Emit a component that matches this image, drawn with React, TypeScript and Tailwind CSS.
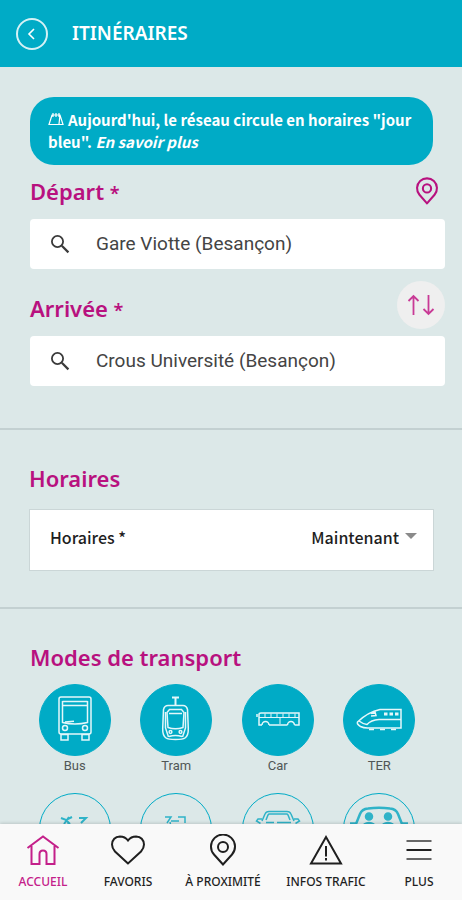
import { useState, type ReactNode } from 'react';
import clsx from 'clsx';

const Pin = ({ className }: { className?: string }) => (
  <svg viewBox="0 0 28 32" fill="none" stroke="currentColor" strokeWidth="2.4" className={className}>
    <path d="M14 30.5 5.2 20.4a11.6 11.6 0 1 1 17.6 0Z" strokeLinejoin="round" />
    <circle cx="14" cy="13" r="4.8" />
  </svg>
);

const SearchIcon = () => (
  <svg viewBox="0 0 20 20" fill="none" stroke="#3a3a3a" strokeWidth="1.8" className="h-5 w-5 shrink-0">
    <circle cx="7.5" cy="7.5" r="5.6" />
    <path d="m11.8 11.8 6.6 6.6" strokeWidth="2.2" />
  </svg>
);

// modes without a caption are named by their title only
const modes: { id: string; title: string; caption?: string; icon: ReactNode }[] = [
  {
    id: 'bus',
    title: 'Bus',
    caption: 'Bus',
    icon: (
      <>
        <rect x="20" y="13" width="32" height="37" rx="2" />
        <path d="M23.500 17.500h25M23.500 21.500h25M23.500 17v21.500q12.500 3 25 0V17M26 38l9-.8" />
        <circle cx="26" cy="44" r="2.500" />
        <circle cx="46" cy="44" r="2.500" />
        <path d="M22 50.500h7V56h-7zM43 50.500h7V56h-7z" />
      </>
    ),
  },
  {
    id: 'tram',
    title: 'Tram',
    caption: 'Tram',
    icon: (
      <>
        <path d="M32 13.500h7M35.500 14v7" strokeWidth="2" />
        <path d="M28 21.500h15q3.500 0 4.500 4l.8 19q.2 7-3.300 9.500-2 1.500-9.500 1.500T26 54q-3.500-2.500-3.300-9.500l.8-19q1-4 4.500-4Z" />
        <path d="M29.500 25.500h12l2.500 3-1 15q-7.500 2.500-15 0l-1-15ZM29 29.500h13" />
        <path d="M25.500 28v16l3 9M45.500 28v16l-3 9M29 52.500q6.500-2 13 0" />
        <circle cx="30.500" cy="48" r="1.400" />
        <circle cx="40.500" cy="48" r="1.400" />
      </>
    ),
  },
  {
    id: 'car',
    title: 'Car',
    caption: 'Car',
    icon: (
      <>
        <path d="M20 41h-3V30.500q0-1.500 2-1.500h38v12h-4.500M27 41h18.500M15 30v3" />
        <path d="M17 33.500h40M23 29.500v4M29 29.500v4M35 29.500v4M41 29.500v4M47 29.500v4M53 29.500v4M38 34v6" strokeWidth="1" />
        <path d="M20 41a3.500 3.500 0 0 1 7 0M45.500 41a3.500 3.500 0 0 1 7 0" />
      </>
    ),
  },
  {
    id: 'ter',
    title: 'TER',
    caption: 'TER',
    icon: (
      <>
        <path d="M58 25.500H37Q25 28 14.500 38q-1 2 3 4.500 3 1.500 7 1.500H58Z" />
        <path d="M58 35.500H36q-8 .5-12 5-4-.5-8-3.500M28 29.500l4-1.500 1 3.500-5 .5" />
        <path d="M41 30h3.500M46.500 30H50M52 30h3.500" strokeWidth="3" />
        <path d="M26 45.500h5M37 45.500h5M48 45.500h5" />
      </>
    ),
  },
  {
    id: 'velo',
    title: 'Vélo',
    icon: (
      <>
        <path d="m22 25 5 2 6-3M25 31l5-7M27 27l4 4M40 25h7l-5 5" strokeWidth="2" />
        <path d="M30 33h14L36 45 29 31l-6 12" />
        <circle cx="22" cy="44" r="8" />
        <circle cx="50" cy="44" r="8" />
      </>
    ),
  },
  {
    id: 'trottinette',
    title: 'Trottinette',
    icon: (
      <>
        <path d="M25 24h6l-4 6M38 24h7v6M31 28h8" />
        <path d="m30 29 4 19h14" />
        <circle cx="28" cy="50" r="4" />
        <circle cx="50" cy="50" r="4" />
      </>
    ),
  },
  {
    id: 'voiture',
    title: 'Voiture',
    icon: (
      <>
        <path d="m20 28 3-7q1-2.500 4-2.500h18q3 0 4 2.500l3 7M24 27l2-5 1-1h18l1 1 2 5" />
        <path d="M20 26h-4l-1.500 2 4 2.500M52 26h4l1.500 2-4 2.500M24 29.500h8M35 29.500h14" />
        <rect x="16" y="32" width="41" height="17" rx="5" />
      </>
    ),
  },
  {
    id: 'covoiturage',
    title: 'Covoiturage',
    icon: (
      <>
        <path d="m13 31 4-10q2-5 8-5.500 11-1.500 22 0 6 .5 8 5.500l4 10" strokeWidth="2.500" />
        <path d="M7 30.500h6M59 30.500h6" strokeWidth="2.500" />
        <circle cx="26" cy="23.500" r="3.500" fill="currentColor" />
        <circle cx="45" cy="23.500" r="3.500" fill="currentColor" />
        <path d="M21 31.500q5-3 10 0M40 31.500q5-3 10 0" strokeWidth="2.500" />
        <rect x="10" y="34" width="52" height="16" rx="5" />
      </>
    ),
  },
];

const navItems: { label: string; icon: ReactNode }[] = [
  {
    label: 'ACCUEIL',
    icon: <path d="M1.500 14 17 2.500 32.500 14M5.500 12v18h8V20q0-3.500 3.500-3.500t3.500 3.500v10h8V12" />,
  },
  {
    label: 'FAVORIS',
    icon: <path d="M17 29.500 4 17.500Q1 14 1 10.500 1.500 3 9 2.500q5 0 8 4 3-4 8-4 7.500.5 8 8 0 3.500-3 7Z" />,
  },
  {
    label: 'À PROXIMITÉ',
    icon: (
      <>
        <path d="M17 30.500 8 20.500a12 12 0 1 1 18 0Z" />
        <circle cx="17" cy="13" r="5" />
      </>
    ),
  },
  {
    label: 'INFOS TRAFIC',
    icon: <path d="M17 3 32 29.500H2ZM17 12v10.500M17 24v2.500" />,
  },
  {
    label: 'PLUS',
    icon: (
      <>
        <path d="M4.500 7h25M4.500 25h25" stroke="#666666" />
        <path d="M4.500 16h25" />
      </>
    ),
  },
];

const Heading = ({ children }: { children: ReactNode }) => (
  <h2 className="text-[22px] leading-7 font-semibold text-[#b8117f]">{children}</h2>
);

const App = () => {
  const [from, setFrom] = useState('Gare Viotte (Besançon)');
  const [to, setTo] = useState('Crous Université (Besançon)');
  const [selected, setSelected] = useState(['bus', 'tram', 'car', 'ter']);

  const swap = () => {
    setFrom(to);
    setTo(from);
  };

  const toggle = (id: string) => {
    setSelected(selected.includes(id) ? selected.filter((s) => s !== id) : [...selected, id]);
  };

  return (
    <div className="flex h-dvh flex-col bg-[#dce8e8] font-['Noto_Sans',sans-serif]">
      <header className="flex h-[67px] shrink-0 items-center gap-6 bg-[#00abc6] px-4 text-white">
        <button aria-label="Retour" className="flex h-8 w-8 items-center justify-center rounded-full border-2 border-[#d5f1f5]">
          <svg viewBox="0 0 12 12" fill="none" stroke="currentColor" strokeWidth="1.600" className="h-3 w-3">
            <path d="M8 1 3 6l5 5" />
          </svg>
        </button>
        <h1 className="text-[19px] font-semibold">ITINÉRAIRES</h1>
      </header>

      <main className="min-h-0 flex-1 overflow-y-auto [scrollbar-width:none]">
        <section className="border-b-2 border-[#c3d0d1] pt-[30px] pr-[17px] pb-[42px] pl-[30px]">
          <p className="mr-3 rounded-[24px] bg-[#00abc6] py-3 pr-3 pl-[18px] font-['Noto_Sans_CJK_SC',sans-serif] text-[15px] leading-[22px] font-bold text-white">
            <svg viewBox="0 0 16 14" fill="none" stroke="currentColor" strokeWidth="1.200" className="mr-1 inline h-[14px] w-4 align-baseline">
              <path d="M1 12.500 4 3h8l3 9.500ZM5 1v4M8 1v4M11 1v4M12 3l-1 9" />
            </svg>
            Aujourd'hui, le réseau circule en horaires "jour bleu".{' '}
            <a href="#horaires" className="italic">En savoir plus</a>
          </p>

          <div className="flex h-[54px] items-center justify-between pr-1.5 pb-0.5">
            <Heading>
              <label htmlFor="from">Départ <span className="text-lg leading-5">*</span></label>
            </Heading>
            <button aria-label="Me localiser" className="text-[#b8117f]">
              <Pin className="h-7 w-6" />
            </button>
          </div>
          <div className="flex h-[50px] items-center rounded-sm bg-white pr-4 pl-5">
            <SearchIcon />
            <input
              id="from"
              value={from}
              onChange={(e) => setFrom(e.target.value)}
              className="ml-[26px] min-w-0 flex-1 font-[Roboto,sans-serif] text-[19px] text-[#444444] outline-none"
            />
          </div>

          <div className="flex items-center justify-between pt-3 pb-[7px]">
            <div className="pt-1.5">
              <Heading>
                <label htmlFor="to">Arrivée <span className="text-lg leading-5">*</span></label>
              </Heading>
            </div>
            <button onClick={swap} aria-label="Inverser" className="flex h-12 w-12 items-center justify-center rounded-full bg-[#efefef]">
              <svg viewBox="0 0 28 22" fill="none" stroke="#c93a96" strokeWidth="1.800" className="h-[22px] w-7">
                <path d="M6.500 21V2M1.500 7l5-5 5 5M21.500 1v19M16.500 15l5 5 5-5" />
              </svg>
            </button>
          </div>
          <div className="flex h-[50px] items-center rounded-sm bg-white pr-4 pl-5">
            <SearchIcon />
            <input
              id="to"
              value={to}
              onChange={(e) => setTo(e.target.value)}
              className="ml-[26px] min-w-0 flex-1 font-[Roboto,sans-serif] text-[19px] text-[#444444] outline-none"
            />
          </div>
        </section>

        <section id="horaires" className="border-b-2 border-[#c3d0d1] pt-[34px] pr-7 pb-9 pl-[29px]">
          <Heading>Horaires</Heading>
          <div className="mt-[17px] flex h-[62px] items-center justify-between border border-[#cbd6d7] bg-white px-5 pb-1.5 font-['Noto_Sans_CJK_SC',sans-serif] text-base font-medium text-[#1e1e1e]">
            <label htmlFor="when">Horaires *</label>
            <div className="relative">
              <select id="when" defaultValue="Maintenant" className="appearance-none bg-transparent pr-[14px] text-right outline-none">
                <option>Maintenant</option>
              </select>
              <svg viewBox="0 0 12 6" fill="#8a8a8a" className="pointer-events-none absolute top-2 -right-1 h-1.5 w-3">
                <path d="M0 0h12L6 6Z" />
              </svg>
            </div>
          </div>
        </section>

        <section className="pt-[34px] pb-6">
          <div className="px-[30px]">
            <Heading>Modes de transport</Heading>
          </div>
          <div className="mt-[13px] grid grid-cols-4 gap-y-[17px] pr-8 pl-6">
            {modes.map((mode) => (
              <label key={mode.id} className="relative flex flex-col items-center">
                <input
                  type="checkbox"
                  aria-label={mode.title}
                  checked={selected.includes(mode.id)}
                  onChange={() => toggle(mode.id)}
                  className="sr-only"
                />
                <span
                  className={clsx(
                    'h-[72px] w-[72px] rounded-full border border-[#00abc6]',
                    selected.includes(mode.id) ? 'bg-[#00abc6] text-[#e3f7fa]' : 'text-[#2fb3c8]'
                  )}
                >
                  <svg viewBox="1 1 70 70" fill="none" stroke="currentColor" strokeWidth="1.500" className="h-full w-full">
                    {mode.icon}
                  </svg>
                </span>
                {mode.caption && (
                  <span className="font-[Roboto,sans-serif] text-[13px] leading-5 text-[#505656]">{mode.caption}</span>
                )}
              </label>
            ))}
          </div>
        </section>
      </main>

      <nav className="relative grid h-[76px] shrink-0 grid-cols-[86fr_84fr_106fr_100fr_86fr] bg-[#f9f9f9] pt-2.5 shadow-[0_-1px_3px_rgba(0,0,0,0.15)]">
        {navItems.map((item, i) => (
          <a
            key={item.label}
            href="#"
            className={clsx('flex flex-col items-center gap-1', i === 0 ? 'text-[#c4208a]' : 'text-[#1f1f1f]')}
          >
            <svg viewBox="0 0 34 32" fill="none" stroke="currentColor" strokeWidth="2" className="h-8 w-[34px]">
              {item.icon}
            </svg>
            <span className="text-xs leading-6 font-medium whitespace-nowrap">{item.label}</span>
          </a>
        ))}
      </nav>
    </div>
  );
};

export default App;
